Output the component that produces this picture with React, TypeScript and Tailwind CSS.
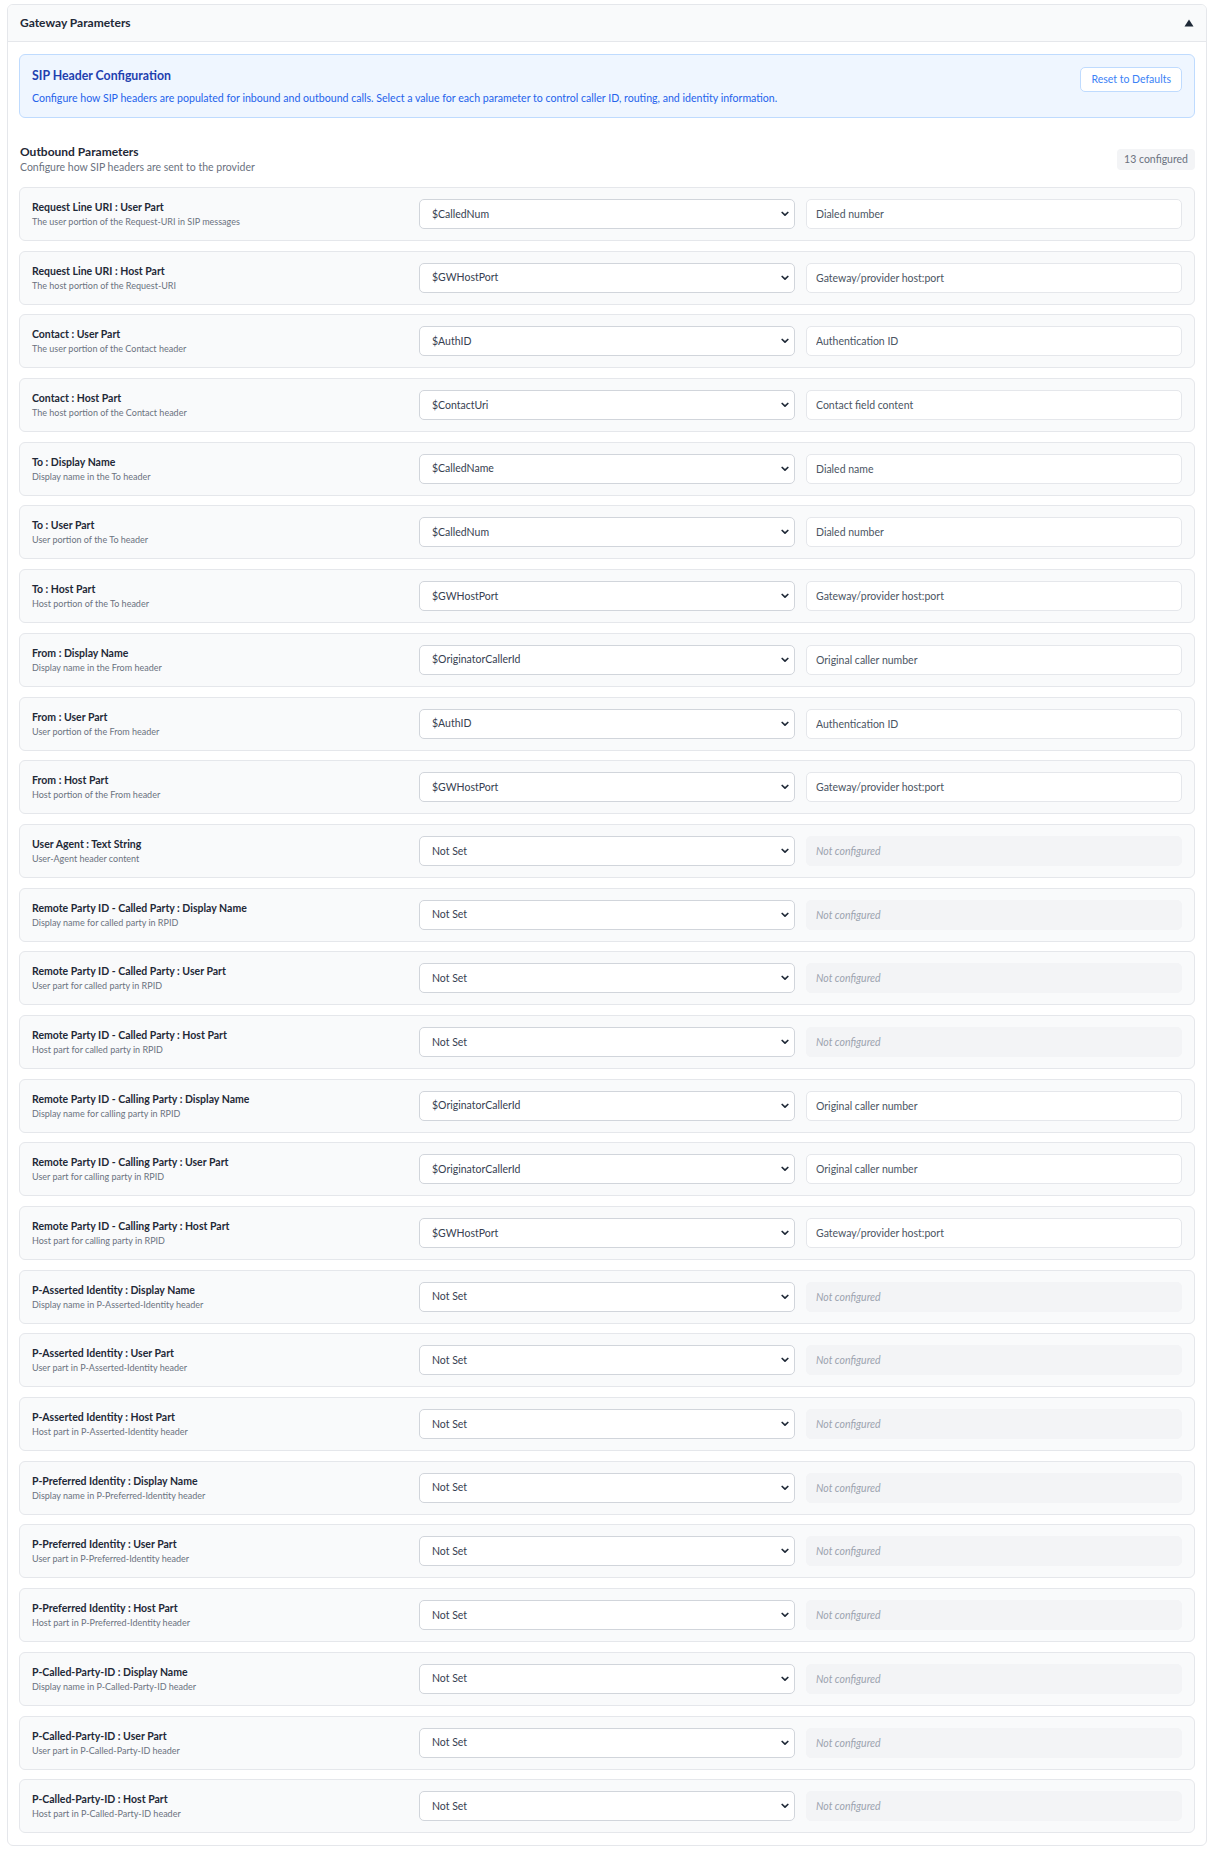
import { useState } from 'react';

type Param = {
  id: string;
  label: string;
  hint: string;
  value: string;
};

const VARIABLES: Record<string, string> = {
  '$CalledNum': 'Dialed number',
  '$CalledName': 'Dialed name',
  '$GWHostPort': 'Gateway/provider host:port',
  '$AuthID': 'Authentication ID',
  '$ContactUri': 'Contact field content',
  '$OriginatorCallerId': 'Original caller number',
};

const OUTBOUND: Param[] = [
  { id: 'rl_user', label: 'Request Line URI : User Part', hint: 'The user portion of the Request-URI in SIP messages', value: '$CalledNum' },
  { id: 'rl_host', label: 'Request Line URI : Host Part', hint: 'The host portion of the Request-URI', value: '$GWHostPort' },
  { id: 'contact_user', label: 'Contact : User Part', hint: 'The user portion of the Contact header', value: '$AuthID' },
  { id: 'contact_host', label: 'Contact : Host Part', hint: 'The host portion of the Contact header', value: '$ContactUri' },
  { id: 'to_display', label: 'To : Display Name', hint: 'Display name in the To header', value: '$CalledName' },
  { id: 'to_user', label: 'To : User Part', hint: 'User portion of the To header', value: '$CalledNum' },
  { id: 'to_host', label: 'To : Host Part', hint: 'Host portion of the To header', value: '$GWHostPort' },
  { id: 'from_display', label: 'From : Display Name', hint: 'Display name in the From header', value: '$OriginatorCallerId' },
  { id: 'from_user', label: 'From : User Part', hint: 'User portion of the From header', value: '$AuthID' },
  { id: 'from_host', label: 'From : Host Part', hint: 'Host portion of the From header', value: '$GWHostPort' },
  { id: 'ua', label: 'User Agent : Text String', hint: 'User-Agent header content', value: '' },
  { id: 'rpid_called_display', label: 'Remote Party ID - Called Party : Display Name', hint: 'Display name for called party in RPID', value: '' },
  { id: 'rpid_called_user', label: 'Remote Party ID - Called Party : User Part', hint: 'User part for called party in RPID', value: '' },
  { id: 'rpid_called_host', label: 'Remote Party ID - Called Party : Host Part', hint: 'Host part for called party in RPID', value: '' },
  { id: 'rpid_calling_display', label: 'Remote Party ID - Calling Party : Display Name', hint: 'Display name for calling party in RPID', value: '$OriginatorCallerId' },
  { id: 'rpid_calling_user', label: 'Remote Party ID - Calling Party : User Part', hint: 'User part for calling party in RPID', value: '$OriginatorCallerId' },
  { id: 'rpid_calling_host', label: 'Remote Party ID - Calling Party : Host Part', hint: 'Host part for calling party in RPID', value: '$GWHostPort' },
  { id: 'pai_display', label: 'P-Asserted Identity : Display Name', hint: 'Display name in P-Asserted-Identity header', value: '' },
  { id: 'pai_user', label: 'P-Asserted Identity : User Part', hint: 'User part in P-Asserted-Identity header', value: '' },
  { id: 'pai_host', label: 'P-Asserted Identity : Host Part', hint: 'Host part in P-Asserted-Identity header', value: '' },
  { id: 'ppi_display', label: 'P-Preferred Identity : Display Name', hint: 'Display name in P-Preferred-Identity header', value: '' },
  { id: 'ppi_user', label: 'P-Preferred Identity : User Part', hint: 'User part in P-Preferred-Identity header', value: '' },
  { id: 'ppi_host', label: 'P-Preferred Identity : Host Part', hint: 'Host part in P-Preferred-Identity header', value: '' },
  { id: 'pcpid_display', label: 'P-Called-Party-ID : Display Name', hint: 'Display name in P-Called-Party-ID header', value: '' },
  { id: 'pcpid_user', label: 'P-Called-Party-ID : User Part', hint: 'User part in P-Called-Party-ID header', value: '' },
  { id: 'pcpid_host', label: 'P-Called-Party-ID : Host Part', hint: 'Host part in P-Called-Party-ID header', value: '' },
];

function Chevron() {
  return (
    <svg width="8" height="6" viewBox="0 0 8 6" className="pointer-events-none absolute right-[6px] top-1/2 -translate-y-1/2">
      <path d="M1.2 1.5 L4 4.2 L6.8 1.5" fill="none" stroke="#1f2937" strokeWidth="1.7" strokeLinecap="round" strokeLinejoin="round" />
    </svg>
  );
}

function ParamRow({ p, onChange }: { p: Param; onChange: (v: string) => void }) {
  const desc = p.value ? VARIABLES[p.value] : '';
  return (
    <div className="grid h-[54px] grid-cols-3 items-center gap-[11px] rounded-[6px] border border-[#e5e7eb] bg-[#f9fafb] px-[12px]">
      <div className="min-w-0">
        <div className="text-[10.5px] font-bold leading-[14px] text-[#1f2937]">{p.label}</div>
        <div className="mt-[2px] text-[9px] leading-[12px] text-[#6b7280]">{p.hint}</div>
      </div>
      <div className="relative">
        <select
          value={p.value}
          onChange={e => onChange(e.target.value)}
          className="h-[30px] w-full appearance-none rounded-[5px] border border-[#d1d5db] bg-white pl-[12px] pr-6 pt-[1px] text-[10.5px] text-[#374151] outline-none"
        >
          <option value="">Not Set</option>
          {Object.keys(VARIABLES).map(v => (
            <option key={v} value={v}>{v}</option>
          ))}
        </select>
        <Chevron />
      </div>
      {desc ? (
        <input
          readOnly
          value={desc}
          className="h-[30px] w-full rounded-[5px] border border-[#e5e7eb] bg-white px-[9px] text-[10.5px] text-[#4b5563] outline-none"
        />
      ) : (
        <input
          readOnly
          placeholder="Not configured"
          className="h-[30px] w-full rounded-[5px] border border-[#f3f4f6] bg-[#f3f4f6] px-[9px] text-[10.5px] italic text-[#4b5563] outline-none placeholder:text-[#9ca3af]"
        />
      )}
    </div>
  );
}

export default function App() {
  const [params, setParams] = useState(OUTBOUND);
  const [open, setOpen] = useState(true);

  const configured = params.filter(p => p.value).length;

  const update = (id: string, value: string) =>
    setParams(ps => ps.map(p => (p.id === id ? { ...p, value } : p)));

  return (
    <div className="min-h-screen bg-white pl-[7px] pt-[4px]" style={{ fontFamily: 'Lato, "Noto Sans", sans-serif' }}>
      <div className="w-[1200px] overflow-hidden rounded-[6px] border border-[#e5e7eb]">
        <button
          onClick={() => setOpen(!open)}
          className="flex h-[37px] w-full items-center justify-between border-b border-[#e5e7eb] bg-[#f9fafb] pl-[12px] pr-[12px]"
        >
          <span className="text-[12px] font-bold text-[#1f2937]">Gateway Parameters</span>
          <svg width="10" height="8" viewBox="0 0 10 8">
            <path d="M5 0.5 L9.5 7.5 L0.5 7.5 Z" fill="#1f2937" />
          </svg>
        </button>

        {open && (
          <div className="px-[11px] pb-[12px] pt-[12px]">
            <div className="flex items-start justify-between rounded-[6px] border border-[#bfdbfe] bg-[#eff6ff] px-[12px] pb-[12px] pt-[13px]">
              <div>
                <div className="text-[12.3px] font-bold leading-[16px] text-[#1e40af]">SIP Header Configuration</div>
                <div className="mt-[7px] text-[10.6px] leading-[14px] text-[#2563eb]">
                  Configure how SIP headers are populated for inbound and outbound calls. Select a value for each parameter to control caller ID, routing, and identity information.
                </div>
              </div>
              <button
                onClick={() => setParams(OUTBOUND)}
                className="-mt-px h-[25px] rounded-[5px] border border-[#bfdbfe] bg-white px-[10px] text-[10.5px] text-[#3b82f6]"
              >
                Reset to Defaults
              </button>
            </div>

            <div className="mt-[26px] flex items-center justify-between pl-[1px]">
              <div>
                <div className="text-[12px] font-bold leading-[16px] text-[#1f2937]">Outbound Parameters</div>
                <div className="text-[10.5px] leading-[14px] text-[#6b7280]">Configure how SIP headers are sent to the provider</div>
              </div>
              <span className="rounded-[4px] bg-[#f3f4f6] px-[7px] py-[4px] text-[10.5px] leading-[13px] text-[#6b7280]">
                {configured} configured
              </span>
            </div>

            <div className="mt-[13px] flex flex-col gap-[9.7px]">
              {params.map(p => (
                <ParamRow key={p.id} p={p} onChange={v => update(p.id, v)} />
              ))}
            </div>
          </div>
        )}
      </div>
    </div>
  );
}
